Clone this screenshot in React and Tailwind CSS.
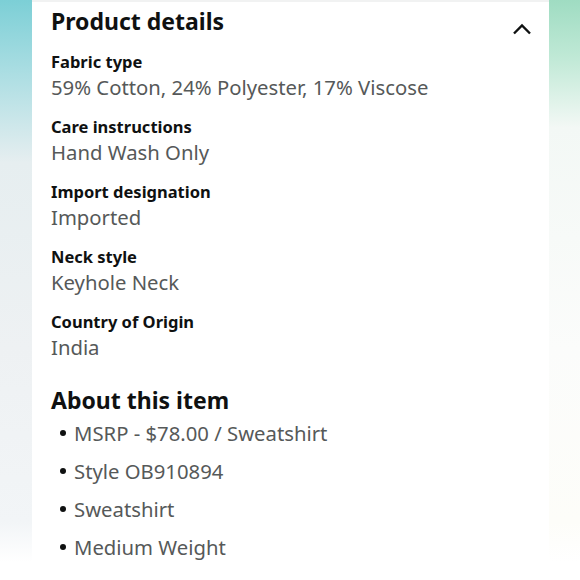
export default function App() {
  const details = [
    ['Fabric type', '59% Cotton, 24% Polyester, 17% Viscose'],
    ['Care instructions', 'Hand Wash Only'],
    ['Import designation', 'Imported'],
    ['Neck style', 'Keyhole Neck'],
    ['Country of Origin', 'India'],
  ]
  const bullets = ['MSRP - $78.00 / Sweatshirt', 'Style OB910894', 'Sweatshirt', 'Medium Weight']

  return (
    <div
      className="flex h-[580px] w-[580px] overflow-hidden bg-white"
      style={{ fontFamily: '"Noto Sans", "Open Sans", sans-serif' }}
    >
      <div className="w-8 shrink-0 bg-[linear-gradient(180deg,#7ccfd6_0%,#a9dde2_12%,#e6eef0_28%,#eef1f3_60%,#f2f5f7_90%,#ffffff_97%)]" />

      <div className="flex min-w-0 flex-1 flex-col">
        <div className="h-[563px] border-t-2 border-[#f1f2f2] bg-white pl-[19px] pr-4">
          <div className="flex items-start justify-between">
            <h2 className="mt-[2px] text-[23px] font-bold leading-[34px] text-[#0f1111]">Product details</h2>
            <svg className="mr-[1px] mt-[21px]" width="20" height="12" viewBox="0 0 20 12" fill="none">
              <polyline points="2,10.5 10,2.5 18,10.5" stroke="#0f1111" strokeWidth="2.4" />
            </svg>
          </div>

          <div className="mt-[13px] flex flex-col">
            {details.map(([label, value]) => (
              <div key={label} className="mb-[15px]">
                <div className="text-[16.5px] font-bold leading-[22px] text-[#0f1111]">{label}</div>
                <div className="text-[20.3px] leading-[28px] text-[#565959]">{value}</div>
              </div>
            ))}
          </div>

          <h2 className="mt-[7px] text-[23px] font-bold leading-[34px] text-[#0f1111]">About this item</h2>
          <ul className="mt-[-3px] flex flex-col">
            {bullets.map((b) => (
              <li key={b} className="flex items-center text-[20.3px] leading-[38px] text-[#565959]">
                <span className="ml-[9px] mr-[8px] size-[6px] shrink-0 rounded-full bg-[#0f1111]" />
                {b}
              </li>
            ))}
          </ul>
        </div>
      </div>

      <div className="w-[31px] shrink-0 bg-[linear-gradient(180deg,#9fdcc2_0%,#c0e9d6_10%,#f3f8f5_22%,#fbfcfb_60%,#fdfdf9_90%,#ffffff_97%)]" />
    </div>
  )
}
